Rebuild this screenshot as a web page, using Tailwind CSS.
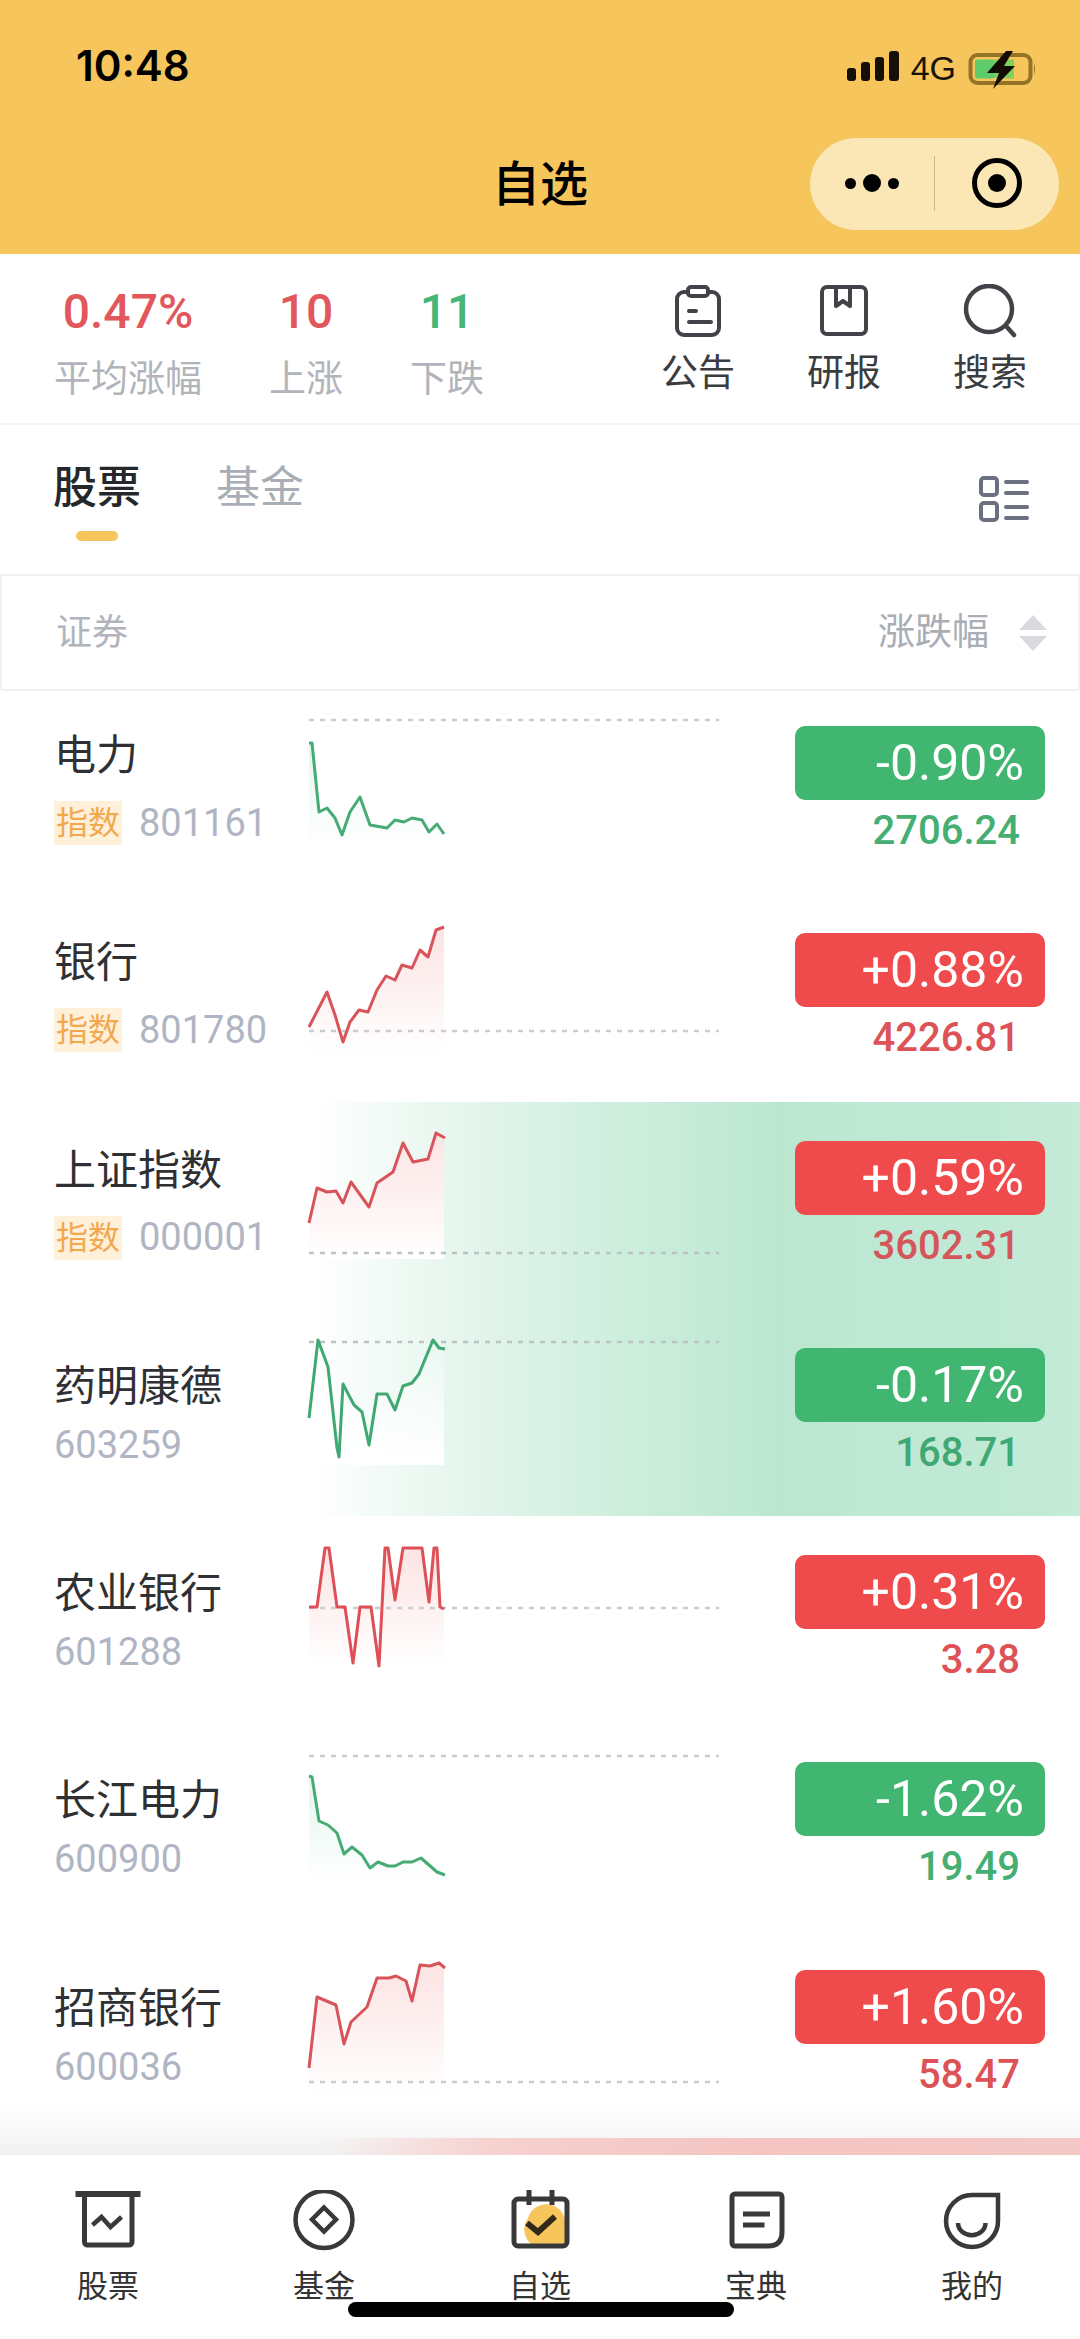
<!DOCTYPE html>
<html lang="zh-CN">
<head>
  <meta charset="UTF-8">
  <meta name="viewport" content="width=device-width, initial-scale=1.0">
  <title>自选</title>
  <script src="https://cdn.jsdelivr.net/npm/@tailwindcss/browser@4"></script>
</head>
<body class="bg-white">
  <svg class="absolute w-0 h-0">
    <defs>
      <linearGradient id="redFill" x1="0" y1="0" x2="0" y2="1"><stop offset="0" stop-color="#f05a5a" stop-opacity=".17"/><stop offset="1" stop-color="#f05a5a" stop-opacity="0"/></linearGradient>
      <linearGradient id="greenFill" x1="0" y1="0" x2="0" y2="1"><stop offset="0" stop-color="#3cc07c" stop-opacity=".14"/><stop offset="1" stop-color="#3cc07c" stop-opacity="0"/></linearGradient>
      <linearGradient id="whiteFill" x1="0" y1="0" x2="0" y2="1"><stop offset="0" stop-color="#ffffff" stop-opacity=".1"/><stop offset="1" stop-color="#ffffff" stop-opacity="1"/></linearGradient>
    </defs>
  </svg>

  <div class="relative w-[1080px] h-[2339px] overflow-hidden flex flex-col bg-white font-['Roboto','Noto_Sans_CJK_SC',sans-serif] text-[#2f3033]">

    <!-- header -->
    <header class="h-[254px] shrink-0 bg-[#f6c55c] flex flex-col text-black">
      <div class="h-[138px] flex justify-between pl-[76px] pr-[44px] pt-[42px]">
        <span class="font-['Inter',sans-serif] text-[42px] leading-[48px] font-semibold">10:48</span>
        <div class="flex items-start gap-[11px] pt-[9px]">
          <svg width="54" height="32" viewBox="0 0 54 32" fill="#160f06"><rect x="1" y="17" width="9" height="13" rx="3"/><rect x="15" y="11" width="9" height="19" rx="3"/><rect x="29" y="6" width="9" height="24" rx="3"/><rect x="43" y="0" width="10" height="30" rx="3"/></svg>
          <span class="text-[34px] leading-[34px] font-medium font-['Liberation_Sans',sans-serif] text-[#1a1408]">4G</span>
          <svg class="ml-[1px]" width="68" height="38" viewBox="0 0 68 38"><rect x="2.500" y="4" width="60" height="28" rx="7" fill="none" stroke="#937426" stroke-width="4"/><rect x="7" y="8.500" width="20" height="19" rx="2" fill="#5fcb6a"/><rect x="27" y="8.500" width="19" height="19" fill="#7fd05c"/><polygon points="38,0 19,22 31,22 25,38 47,15 36,15 45,0" fill="#120c04"/><path d="M66 12 q2 6 0 12z" fill="#937426"/></svg>
        </div>
      </div>
      <div class="relative flex-1 flex justify-center">
        <h1 class="text-[48px] leading-[94px] font-medium">自选</h1>
        <div class="absolute left-[810px] top-0 w-[249px] h-[92px] rounded-full bg-[#fbe6b6] flex items-center">
          <div class="w-[124px] flex items-center justify-center gap-[7px] -mt-[2px]">
            <span class="w-[11px] h-[11px] rounded-full bg-black"></span>
            <span class="w-[18px] h-[18px] rounded-full bg-black"></span>
            <span class="w-[11px] h-[11px] rounded-full bg-black"></span>
          </div>
          <div class="w-px h-[55px] bg-[#cdb98e] -mt-[2px]"></div>
          <div class="flex-1 flex justify-center -mt-[2px]">
            <span class="w-[50px] h-[50px] rounded-full border-[5px] border-black flex items-center justify-center"><span class="w-[18px] h-[18px] rounded-full bg-black"></span></span>
          </div>
        </div>
      </div>
    </header>

    <!-- stats + shortcuts -->
    <section class="h-[171px] shrink-0 flex justify-between pl-[54px] pr-[17px] border-b-2 border-[#f4f5f6]">
      <div class="flex gap-[67px] pt-[30px] text-center">
        <div>
          <div class="text-[48px] leading-[56px] font-medium text-[#e2575c]">0.47%</div>
          <div class="text-[37px] leading-[52px] mt-[14px] text-[#b1b4bb]">平均涨幅</div>
        </div>
        <div>
          <div class="text-[48px] leading-[56px] font-medium text-[#e2575c]">10</div>
          <div class="text-[37px] leading-[52px] mt-[14px] text-[#b1b4bb]">上涨</div>
        </div>
        <div>
          <div class="text-[48px] leading-[56px] font-medium text-[#45b579]">11</div>
          <div class="text-[37px] leading-[52px] mt-[14px] text-[#b1b4bb]">下跌</div>
        </div>
      </div>
      <div class="flex pt-[30px] text-[37px] leading-[44px] text-[#3a3c40] text-center">
        <div class="w-[146px] flex flex-col items-center">
          <svg width="56" height="54" viewBox="0 0 56 54" fill="none" stroke="#414348" stroke-width="4" stroke-linecap="round"><rect x="7" y="8" width="42" height="43" rx="7"/><rect x="18" y="3" width="20" height="9" rx="3" fill="#fff"/><path d="M19 27h7M19 38h22"/></svg>
          <span class="mt-[14px]">公告</span>
        </div>
        <div class="w-[146px] flex flex-col items-center">
          <svg width="56" height="54" viewBox="0 0 56 54" fill="none" stroke="#414348" stroke-width="4" stroke-linejoin="round"><rect x="6" y="3" width="44" height="47" rx="5"/><path d="M20 3v19l7-5 7 5V3"/></svg>
          <span class="mt-[14px]">研报</span>
        </div>
        <div class="w-[146px] flex flex-col items-center">
          <svg width="56" height="54" viewBox="0 0 56 54" fill="none" stroke="#414348" stroke-width="4.500" stroke-linecap="round"><circle cx="27" cy="25" r="23"/><path d="M44 42l8 9"/></svg>
          <span class="mt-[14px]">搜索</span>
        </div>
      </div>
    </section>

    <!-- tabs -->
    <section class="h-[149px] shrink-0 flex justify-between pl-[53px] pr-[50px]">
      <div class="flex gap-[75px] pt-[36px]">
        <div class="flex flex-col items-center">
          <span class="text-[44px] leading-[54px] font-medium text-[#26272a]">股票</span>
          <span class="w-[42px] h-[10px] mt-[16px] rounded-full bg-[#f6c55c]"></span>
        </div>
        <span class="text-[44px] leading-[54px] text-[#a9adb5]">基金</span>
      </div>
      <svg class="mt-[50px]" width="52" height="48" viewBox="0 0 52 48" fill="none" stroke="#6b7080" stroke-width="4" stroke-linecap="round"><rect x="3" y="3" width="16" height="17" rx="3"/><rect x="3" y="28" width="16" height="17" rx="3"/><path d="M28 7h21M28 18h21M28 32h21M28 43h21"/></svg>
    </section>

    <!-- table head -->
    <section class="relative z-10 h-[117px] shrink-0 bg-white border-2 border-[#f0f1f3] rounded-[3px] flex items-center justify-between pl-[54px] pr-[31px]">
      <span class="text-[36px] text-[#b1b4bb]">证券</span>
      <div class="flex items-center gap-[30px]">
        <span class="text-[37px] text-[#a9adb5]">涨跌幅</span>
        <div class="flex flex-col gap-[6px]">
          <span class="w-0 h-0 border-x-[14px] border-x-transparent border-b-[15px] border-b-[#d8dade]"></span>
          <span class="w-0 h-0 border-x-[14px] border-x-transparent border-t-[15px] border-t-[#d8dade]"></span>
        </div>
      </div>
    </section>

    <!-- list -->
    <section class="relative flex-1 -mt-[4px] overflow-hidden">

      <div class="flex h-[207.300px] pl-[54px]">
        <div class="w-[246px] shrink-0 pt-[41px]">
          <div class="text-[42px] leading-[56px]">电力</div>
          <div class="flex items-center mt-[17px] h-[44px]"><span class="w-[68px] h-[44px] bg-[#fff0da] text-[#f2a94e] text-[32px] leading-[44px] text-center">指数</span><span class="ml-[17px] text-[38px] text-[#b0b5c3]">801161</span></div>
        </div>
        <svg class="w-[420px] shrink-0" height="207" viewBox="0 0 420 207" fill="none">
          <polygon fill="url(#greenFill)" points="9,56 12,56 19,125 27,121 35,131 42,148 50,125 60,110 70,138 87,141 95,133 104,135 112,131 122,133 129,145 137,137 144,147 144,160 9,160"/>
          <line x1="9" y1="33" x2="419" y2="33" stroke="#c9ccd0" stroke-width="2.500" stroke-dasharray="5 6"/>
          <polyline stroke="#46ab74" stroke-width="3" stroke-linejoin="round" points="9,56 12,56 19,125 27,121 35,131 42,148 50,125 60,110 70,138 87,141 95,133 104,135 112,131 122,133 129,145 137,137 144,147"/>
        </svg>
        <div class="ml-[75px] w-[250px] shrink-0 pt-[39px] text-right">
          <div class="h-[74px] rounded-[10px] bg-[#41b670] text-white text-[50px] leading-[74px] pr-[21px]">-0.90%</div>
          <div class="mt-[7px] h-[48px] text-[40px] leading-[48px] font-medium pr-[25px] text-[#45ae73]">2706.24</div>
        </div>
      </div>

      <div class="flex h-[207.300px] pl-[54px]">
        <div class="w-[246px] shrink-0 pt-[41px]">
          <div class="text-[42px] leading-[56px]">银行</div>
          <div class="flex items-center mt-[17px] h-[44px]"><span class="w-[68px] h-[44px] bg-[#fff0da] text-[#f2a94e] text-[32px] leading-[44px] text-center">指数</span><span class="ml-[17px] text-[38px] text-[#b0b5c3]">801780</span></div>
        </div>
        <svg class="w-[420px] shrink-0" height="207" viewBox="0 0 420 207" fill="none">
          <polygon fill="url(#redFill)" points="9,133 27,98 35,121 43,148 50,128 59,116 68,118 77,96 86,82 95,86 102,71 112,74 120,56 128,63 136,36 144,33 144,160 9,160"/>
          <line x1="9" y1="137" x2="419" y2="137" stroke="#c9ccd0" stroke-width="2.500" stroke-dasharray="5 6"/>
          <polyline stroke="#d9545a" stroke-width="3" stroke-linejoin="round" points="9,133 27,98 35,121 43,148 50,128 59,116 68,118 77,96 86,82 95,86 102,71 112,74 120,56 128,63 136,36 144,33"/>
        </svg>
        <div class="ml-[75px] w-[250px] shrink-0 pt-[39px] text-right">
          <div class="h-[74px] rounded-[10px] bg-[#f04b4c] text-white text-[50px] leading-[74px] pr-[21px]">+0.88%</div>
          <div class="mt-[7px] h-[48px] text-[40px] leading-[48px] font-medium pr-[25px] text-[#dd5257]">4226.81</div>
        </div>
      </div>

      <!-- highlighted pair -->
      <div class="bg-[linear-gradient(90deg,rgba(255,255,255,0)_29%,#e6f6ee_42%,#cdeedd_58%,#bbe7d1_72%,#c3ebd7_100%)]">
        <div class="flex h-[207.300px] pl-[54px]">
          <div class="w-[246px] shrink-0 pt-[41px]">
            <div class="text-[42px] leading-[56px]">上证指数</div>
            <div class="flex items-center mt-[17px] h-[44px]"><span class="w-[68px] h-[44px] bg-[#fff0da] text-[#f2a94e] text-[32px] leading-[44px] text-center">指数</span><span class="ml-[17px] text-[38px] text-[#b0b5c3]">000001</span></div>
          </div>
          <svg class="w-[420px] shrink-0" height="207" viewBox="0 0 420 207" fill="none">
            <polygon fill="#fff" points="9,121 17,86 27,90 36,89 43,101 51,80 69,105 77,81 93,70 103,41 113,60 128,57 136,31 144,36 144,157 9,157"/>
            <polygon fill="url(#redFill)" points="9,121 17,86 27,90 36,89 43,101 51,80 69,105 77,81 93,70 103,41 113,60 128,57 136,31 144,36 144,157 9,157"/>
            <line x1="9" y1="151" x2="419" y2="151" stroke="#bcc4c2" stroke-width="2.500" stroke-dasharray="5 6"/>
            <polyline stroke="#d9545a" stroke-width="3" stroke-linejoin="round" points="9,121 17,86 27,90 36,89 43,101 51,80 69,105 77,81 93,70 103,41 113,60 128,57 136,31 145,36"/>
          </svg>
          <div class="ml-[75px] w-[250px] shrink-0 pt-[39px] text-right">
            <div class="h-[74px] rounded-[10px] bg-[#f04b4c] text-white text-[50px] leading-[74px] pr-[21px]">+0.59%</div>
            <div class="mt-[7px] h-[48px] text-[40px] leading-[48px] font-medium pr-[25px] text-[#d5565a]">3602.31</div>
          </div>
        </div>

        <div class="flex h-[207.300px] pl-[54px]">
          <div class="w-[246px] shrink-0 pt-[50px]">
            <div class="text-[42px] leading-[56px]">药明康德</div>
            <div class="mt-[8px] h-[44px] text-[38px] leading-[44px] text-[#b0b5c3]">603259</div>
          </div>
          <svg class="w-[420px] shrink-0" height="207" viewBox="0 0 420 207" fill="none">
            <polygon fill="url(#whiteFill)" points="9,109 18,31 28,58 37,139 39,148 43,75 54,96 62,103 69,136 77,85 87,85 95,101 103,77 112,74 119,65 133,31 139,39 144,40 144,156 9,156"/>
            <line x1="9" y1="33" x2="419" y2="33" stroke="#bcc4c2" stroke-width="2.500" stroke-dasharray="5 6"/>
            <polyline stroke="#3fa873" stroke-width="3" stroke-linejoin="round" points="9,109 18,31 28,58 37,139 39,148 43,75 54,96 62,103 69,136 77,85 87,85 95,101 103,77 112,74 119,65 133,31 139,39 145,40"/>
          </svg>
          <div class="ml-[75px] w-[250px] shrink-0 pt-[39px] text-right">
            <div class="h-[74px] rounded-[10px] bg-[#41b670] text-white text-[50px] leading-[74px] pr-[21px]">-0.17%</div>
            <div class="mt-[7px] h-[48px] text-[40px] leading-[48px] font-medium pr-[25px] text-[#3fa873]">168.71</div>
          </div>
        </div>
      </div>

      <div class="flex h-[207.300px] pl-[54px]">
        <div class="w-[246px] shrink-0 pt-[50px]">
          <div class="text-[42px] leading-[56px]">农业银行</div>
          <div class="mt-[8px] h-[44px] text-[38px] leading-[44px] text-[#b0b5c3]">601288</div>
        </div>
        <svg class="w-[420px] shrink-0" height="207" viewBox="0 0 420 207" fill="none">
          <polygon fill="url(#redFill)" points="9,91 17,91 25,32 29,32 37,91 45,91 53,147 60,91 71,91 79,150 85,32 88,32 95,84 103,32 122,32 129,86 134,32 137,32 140,91 144,93 144,150 9,150"/>
          <line x1="9" y1="92" x2="419" y2="92" stroke="#c9ccd0" stroke-width="2.500" stroke-dasharray="5 6"/>
          <polyline stroke="#df4f57" stroke-width="3" stroke-linejoin="round" points="9,91 17,91 25,32 29,32 37,91 45,91 53,147 60,91 71,91 79,150 85,32 88,32 95,84 103,32 122,32 129,86 134,32 137,32 140,91 144,93"/>
        </svg>
        <div class="ml-[75px] w-[250px] shrink-0 pt-[39px] text-right">
          <div class="h-[74px] rounded-[10px] bg-[#f04b4c] text-white text-[50px] leading-[74px] pr-[21px]">+0.31%</div>
          <div class="mt-[7px] h-[48px] text-[40px] leading-[48px] font-medium pr-[25px] text-[#dd5257]">3.28</div>
        </div>
      </div>

      <div class="flex h-[207.300px] pl-[54px]">
        <div class="w-[246px] shrink-0 pt-[50px]">
          <div class="text-[42px] leading-[56px]">长江电力</div>
          <div class="mt-[8px] h-[44px] text-[38px] leading-[44px] text-[#b0b5c3]">600900</div>
        </div>
        <svg class="w-[420px] shrink-0" height="207" viewBox="0 0 420 207" fill="none">
          <polygon fill="url(#greenFill)" points="9,53 12,54 19,98 28,102 37,110 44,131 52,124 62,132 70,145 78,139 88,143 95,143 103,139 112,139 121,135 137,149 144,152 144,160 9,160"/>
          <line x1="9" y1="33" x2="419" y2="33" stroke="#c9ccd0" stroke-width="2.500" stroke-dasharray="5 6"/>
          <polyline stroke="#46ab74" stroke-width="3" stroke-linejoin="round" points="9,53 12,54 19,98 28,102 37,110 44,131 52,124 62,132 70,145 78,139 88,143 95,143 103,139 112,139 121,135 137,149 145,152"/>
        </svg>
        <div class="ml-[75px] w-[250px] shrink-0 pt-[39px] text-right">
          <div class="h-[74px] rounded-[10px] bg-[#41b670] text-white text-[50px] leading-[74px] pr-[21px]">-1.62%</div>
          <div class="mt-[7px] h-[48px] text-[40px] leading-[48px] font-medium pr-[25px] text-[#45ae73]">19.49</div>
        </div>
      </div>

      <div class="flex h-[207.300px] pl-[54px]">
        <div class="w-[246px] shrink-0 pt-[50px]">
          <div class="text-[42px] leading-[56px]">招商银行</div>
          <div class="mt-[8px] h-[44px] text-[38px] leading-[44px] text-[#b0b5c3]">600036</div>
        </div>
        <svg class="w-[420px] shrink-0" height="207" viewBox="0 0 420 207" fill="none">
          <polygon fill="url(#redFill)" points="9,137 17,66 36,74 44,113 51,91 67,76 77,47 89,47 96,45 106,50 112,70 120,34 130,35 139,32 144,37 144,165 9,165"/>
          <line x1="9" y1="151" x2="419" y2="151" stroke="#c9ccd0" stroke-width="2.500" stroke-dasharray="5 6"/>
          <polyline stroke="#d9545a" stroke-width="3" stroke-linejoin="round" points="9,137 17,66 36,74 44,113 51,91 67,76 77,47 89,47 96,45 106,50 112,70 120,34 130,35 139,32 145,37"/>
        </svg>
        <div class="ml-[75px] w-[250px] shrink-0 pt-[39px] text-right">
          <div class="h-[74px] rounded-[10px] bg-[#f04b4c] text-white text-[50px] leading-[74px] pr-[21px]">+1.60%</div>
          <div class="mt-[7px] h-[48px] text-[40px] leading-[48px] font-medium pr-[25px] text-[#dd5257]">58.47</div>
        </div>
      </div>

      <!-- next row's band, cut off by the tab bar -->
      <div class="absolute inset-x-0 bottom-0 h-[48px] bg-gradient-to-b from-white/0 to-[#f1f1f1]"></div>
      <div class="relative z-10 h-[20px] bg-[linear-gradient(90deg,rgba(255,255,255,0)_30%,#f6d2d0_45%,#f3c4c2_70%,#f4c8c6_100%)]"></div>
    </section>

    <!-- tab bar -->
    <nav class="h-[184px] shrink-0 bg-white flex text-[31px] leading-[40px] text-[#333] text-center">
      <div class="w-[216px] flex flex-col items-center pt-[35px]">
        <svg width="72" height="64" viewBox="0 0 72 64" fill="none" stroke="#38393b" stroke-width="5"><path d="M3.500 4H68.500" stroke-width="6"/><path d="M12.500 4V52a3 3 0 003 3H57a3 3 0 003-3V4"/><path d="M20.500 35l9-8 9 10 11-10" stroke-width="4.500"/></svg>
        <span class="mt-[13px]">股票</span>
      </div>
      <div class="w-[216px] flex flex-col items-center pt-[35px]">
        <svg width="72" height="64" viewBox="0 0 72 64" fill="none" stroke="#38393b" stroke-width="4.500"><circle cx="36" cy="29.500" r="28.500"/><path d="M36 17.500l12 12-12 12-12-12z"/></svg>
        <span class="mt-[13px]">基金</span>
      </div>
      <div class="w-[216px] flex flex-col items-center pt-[35px]">
        <svg width="72" height="64" viewBox="0 0 72 64" fill="none">
          <path d="M24 28A19 19 0 0 1 61 30V56H30A19 19 0 0 1 24 28z" fill="#f6c55c"/>
          <rect x="10" y="9" width="53" height="47" rx="4" stroke="#38393b" stroke-width="5"/>
          <path d="M25 0V15M48 0V15" stroke="#38393b" stroke-width="5"/>
          <path d="M23 33l11 9 17-15.500" stroke="#33291a" stroke-width="6"/>
        </svg>
        <span class="mt-[13px]">自选</span>
      </div>
      <div class="w-[216px] flex flex-col items-center pt-[35px]">
        <svg width="72" height="64" viewBox="0 0 72 64" fill="none" stroke="#38393b" stroke-width="5"><path d="M15 4H59a3 3 0 013 3V42Q62 56 48 56H15a3 3 0 01-3-3V7a3 3 0 013-3z"/><path d="M23 24H50M23 35H44.500"/></svg>
        <span class="mt-[13px]">宝典</span>
      </div>
      <div class="w-[216px] flex flex-col items-center pt-[35px]">
        <svg width="72" height="64" viewBox="0 0 72 64" fill="none" stroke="#38393b" stroke-width="4.500"><path d="M36 5H62V30A26 26 0 1 1 36 5Z"/><path d="M22 33A13.500 12 0 0 0 49.500 33"/></svg>
        <span class="mt-[13px]">我的</span>
      </div>
    </nav>

    <!-- home indicator -->
    <div class="absolute left-[348px] top-[2302px] w-[386px] h-[15px] rounded-full bg-black"></div>
  </div>
</body>
</html>
